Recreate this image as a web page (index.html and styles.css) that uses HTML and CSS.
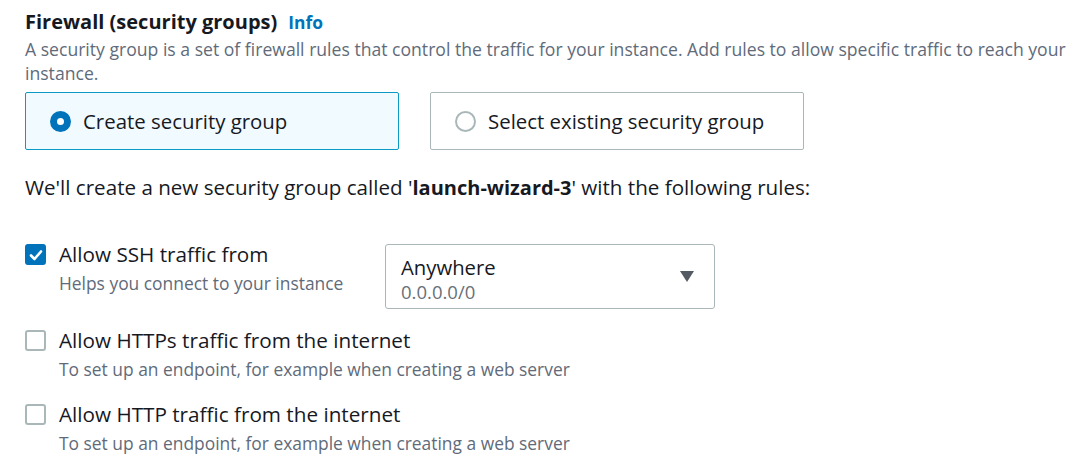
FILE: index.html
```html
<!DOCTYPE html>
<html>
<head>
<meta charset="utf-8">
<link rel="stylesheet" href="styles.css">
</head>
<body>
<div class="page">
  <div class="header">
    <h2 class="title">Firewall (security groups)</h2>
    <a class="info">Info</a>
  </div>
  <p class="desc">A security group is a set of firewall rules that control the traffic for your instance. Add rules to allow specific traffic to reach your instance.</p>

  <div class="tiles">
    <div class="tile selected">
      <span class="radio checked"></span>
      <span class="tile-label">Create security group</span>
    </div>
    <div class="tile">
      <span class="radio"></span>
      <span class="tile-label">Select existing security group</span>
    </div>
  </div>

  <p class="note">We'll create a new security group called '<b>launch-wizard-3</b>' with the following rules:</p>

  <div class="rule rule-ssh">
    <div class="check-wrap">
      <span class="checkbox checked">
        <svg viewBox="0 0 20 20" width="20" height="20"><path d="M5 10.5 L8.5 14 L15 6.5" fill="none" stroke="#fff" stroke-width="2.6" stroke-linecap="round" stroke-linejoin="round"/></svg>
      </span>
      <div class="check-text">
        <div class="check-label">Allow SSH traffic from</div>
        <div class="check-desc">Helps you connect to your instance</div>
      </div>
    </div>
    <div class="select">
      <div class="select-text">
        <div class="select-main">Anywhere</div>
        <div class="select-sub">0.0.0.0/0</div>
      </div>
      <svg class="caret" viewBox="0 0 14 11" width="14" height="11"><path d="M0 0 H14 L7 11 Z" fill="#545b64"/></svg>
    </div>
  </div>

  <div class="rule rule-2">
    <div class="check-wrap">
      <span class="checkbox"></span>
      <div class="check-text">
        <div class="check-label">Allow HTTPs traffic from the internet</div>
        <div class="check-desc">To set up an endpoint, for example when creating a web server</div>
      </div>
    </div>
  </div>

  <div class="rule rule-3">
    <div class="check-wrap">
      <span class="checkbox"></span>
      <div class="check-text">
        <div class="check-label">Allow HTTP traffic from the internet</div>
        <div class="check-desc">To set up an endpoint, for example when creating a web server</div>
      </div>
    </div>
  </div>
</div>
</body>
</html>
```

FILE: styles.css
```css
* { box-sizing: border-box; }
html, body { margin: 0; padding: 0; background: #fff; }
body {
  font-family: "Open Sans", "Noto Sans", sans-serif;
  color: #16191f;
}
.page {
  padding: 9px 0 0 25px;
  width: 1078px;
}
.header {
  display: flex;
  align-items: baseline;
  gap: 11px;
  height: 26px;
}
.title {
  margin: 0;
  font-size: 20px;
  font-weight: 700;
  line-height: 26px;
}
.info {
  color: #0073bb;
  font-weight: 700;
  font-size: 17.4px;
}
.desc {
  margin: 2px 0 0;
  color: #5f6b7a;
  font-size: 17.6px;
  line-height: 24px;
  width: 1052px;
}
.tiles {
  display: flex;
  gap: 31px;
  margin-top: 7px;
}
.tile {
  width: 374px;
  height: 58px;
  border: 1px solid #aab7b8;
  border-radius: 2px;
  display: flex;
  align-items: center;
  padding-left: 24px;
  gap: 12px;
  font-size: 20.4px;
}
.tile.selected {
  background: #f1faff;
  border-color: #0a9ac4;
}
.radio {
  width: 21px;
  height: 21px;
  border-radius: 50%;
  border: 2px solid #aab7b8;
  flex: none;
  background: #fff;
}
.radio.checked {
  border: 7px solid #0073bb;
}
.note {
  margin: 24px 0 0;
  font-size: 20.6px;
  line-height: 26px;
  height: 26px;
}
.note b { font-size: 20px; line-height: 20px; }
.rule {
  display: flex;
  align-items: flex-start;
}
.rule-ssh { margin-top: 42px; }
.rule-2 { margin-top: 19px; }
.rule-3 { margin-top: 21px; }
.check-wrap {
  display: flex;
  gap: 13px;
}
.rule-ssh .check-wrap { width: 360px; }
.checkbox {
  width: 21px;
  height: 21px;
  border: 2px solid #aab7b8;
  border-radius: 3px;
  flex: none;
  margin-top: 2px;
  display: flex;
  align-items: center;
  justify-content: center;
}
.checkbox.checked {
  background: #0073bb;
  border-color: #0073bb;
}
.checkbox svg { flex: none; margin: -2px; }
.check-label {
  font-size: 20.7px;
  line-height: 24px;
}
.check-desc {
  font-size: 17.4px;
  line-height: 24px;
  color: #5f6b7a;
  margin-top: 5px;
}
.select {
  width: 330px;
  height: 65px;
  border: 1px solid #aab7b8;
  border-radius: 3px;
  display: flex;
  justify-content: space-between;
  align-items: center;
  padding: 0 20px 0 15px;
  margin-top: 2px;
}
.select-text { align-self: flex-start; padding-top: 10px; }
.select-main {
  font-size: 20.3px;
  line-height: 24px;
}
.select-sub {
  font-size: 18.5px;
  line-height: 26px;
  color: #687078;
}
```
